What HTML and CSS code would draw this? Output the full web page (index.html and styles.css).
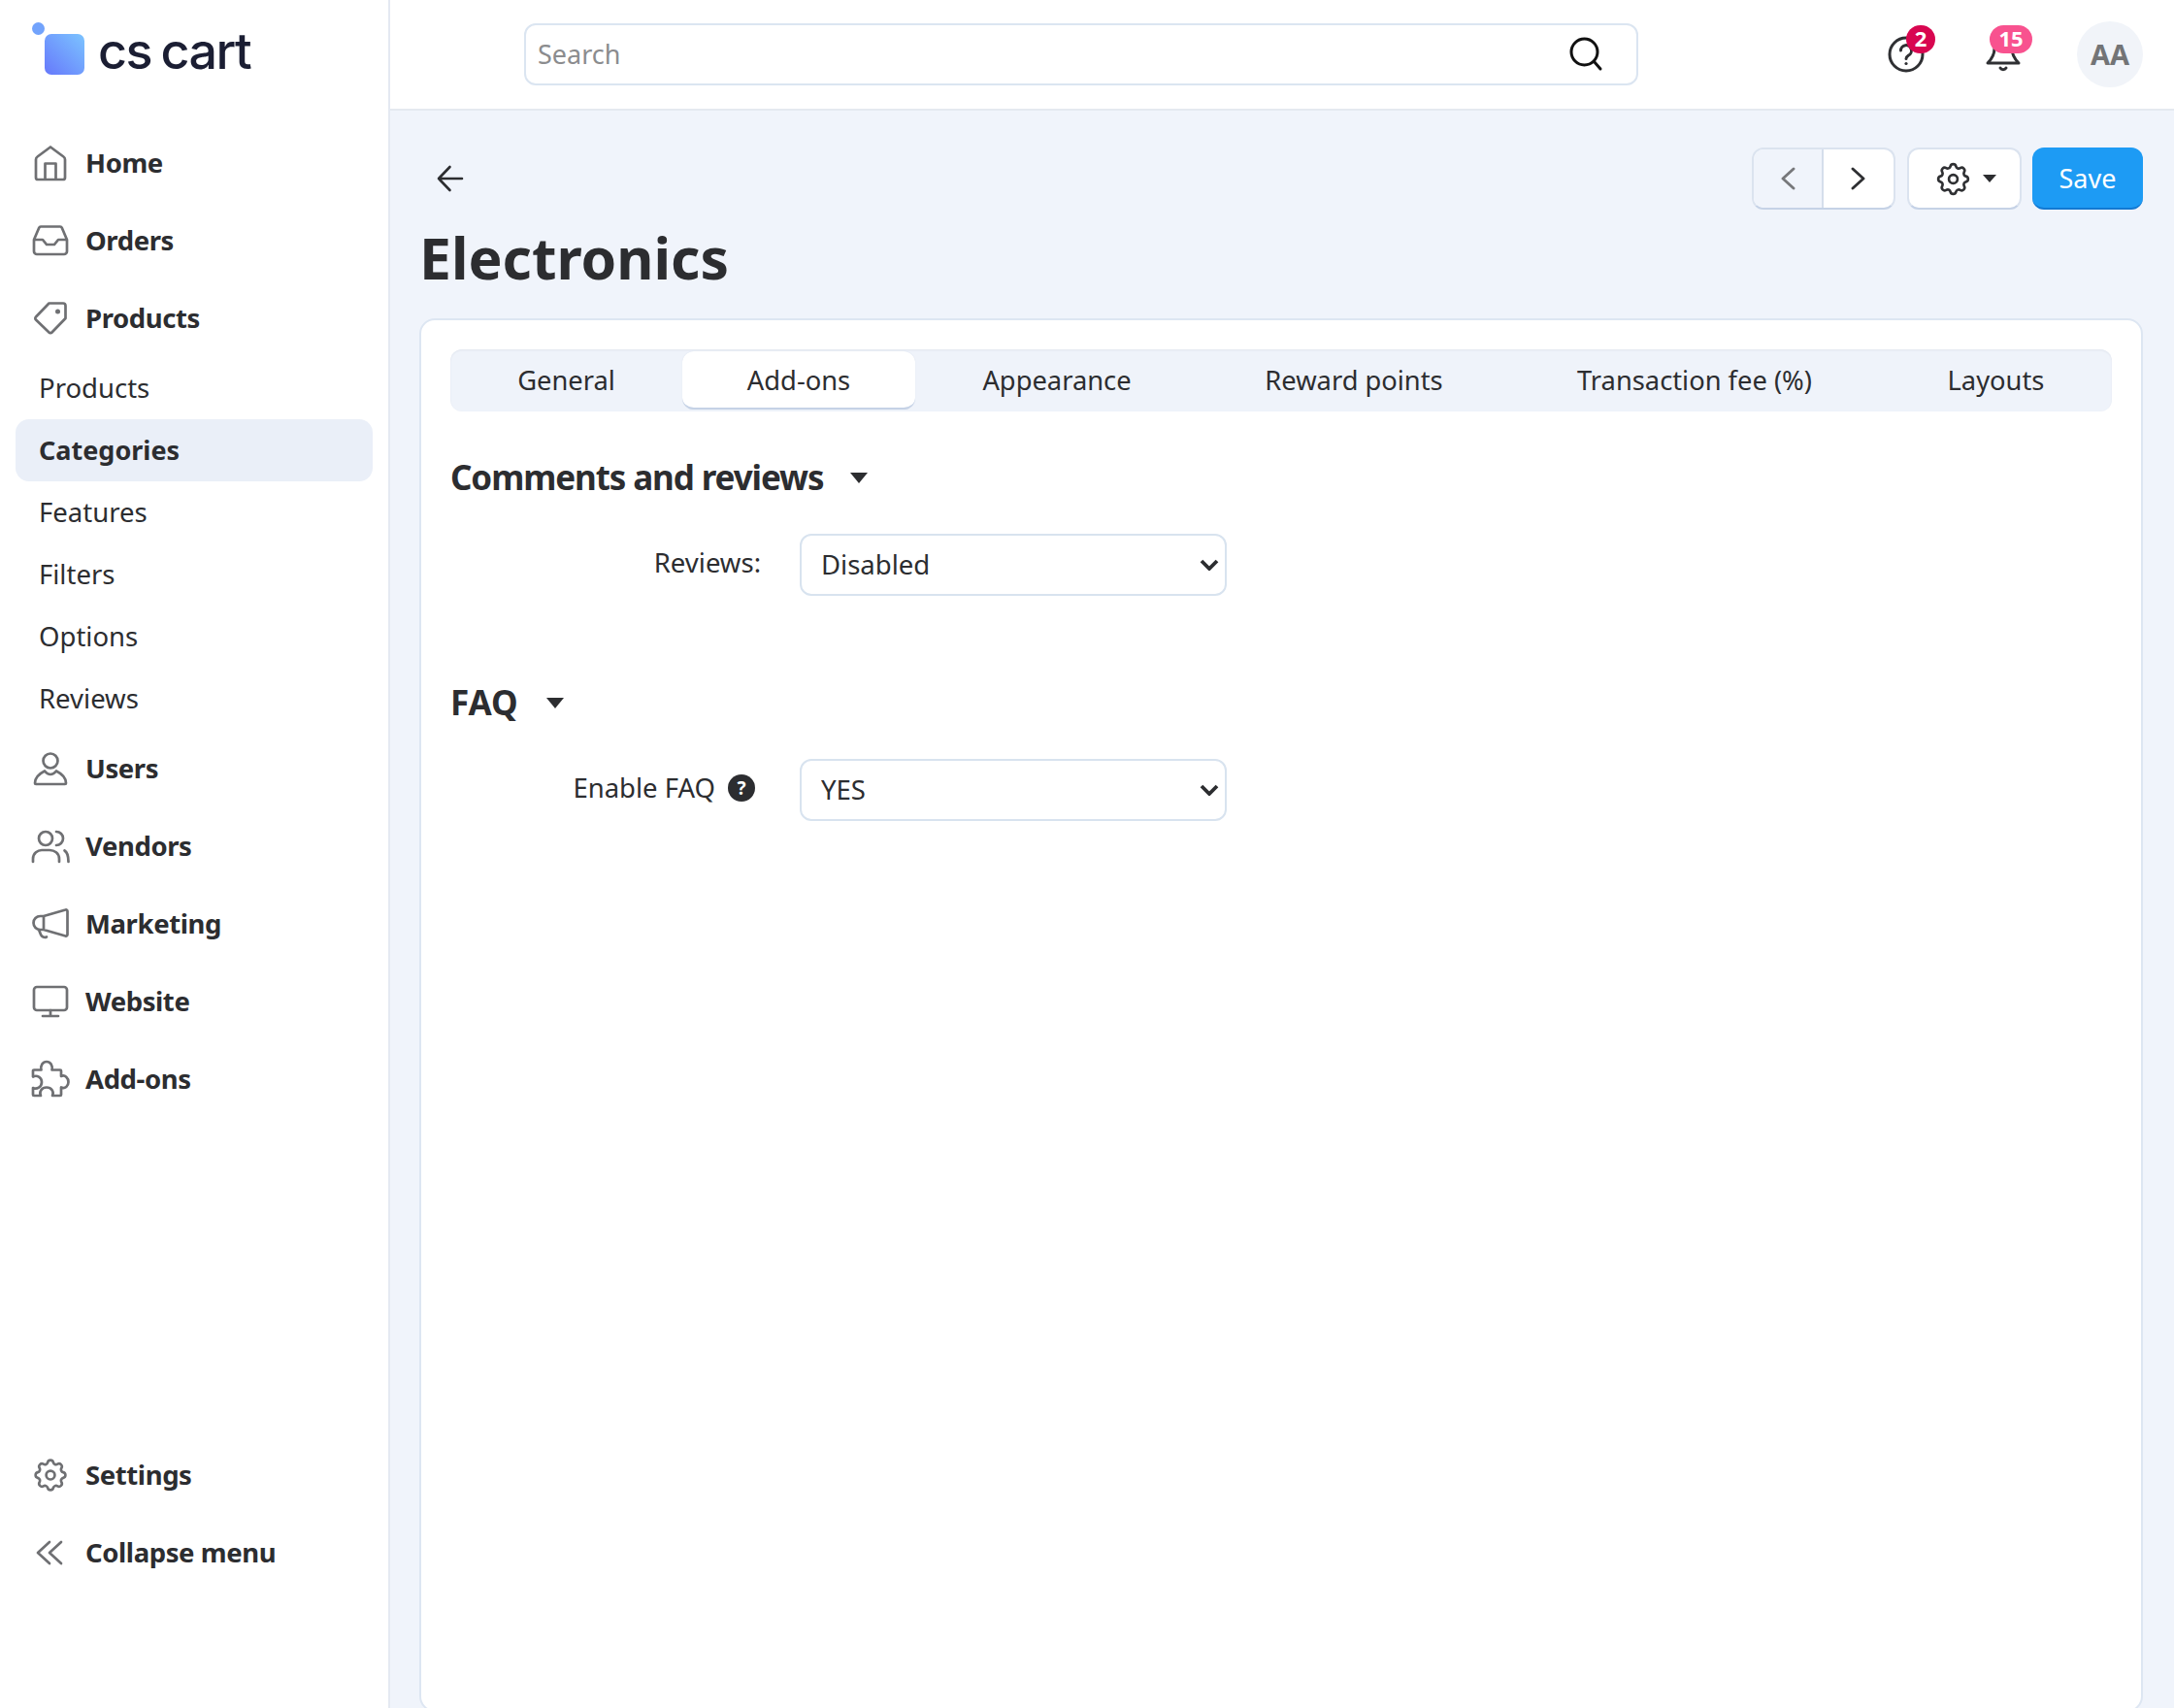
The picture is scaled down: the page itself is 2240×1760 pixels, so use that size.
FILE: index.html
```html
<!DOCTYPE html>
<html lang="en">
<head>
<meta charset="utf-8">
<title>Electronics</title>
<link rel="stylesheet" href="styles.css">
</head>
<body>
<div class="app">
  <aside class="sidebar">
    <a class="logo">
      <span class="logo-mark"><span class="logo-dot"></span><span class="logo-square"></span></span>
      <span class="logo-text">cs cart</span>
    </a>
    <nav class="nav">
      <a class="nav-item"><svg class="nav-icon" viewBox="0 0 40 40"><path d="M5 16.5Q5 14.5 6.5 13.5L20 3.5 33.5 13.5Q35 14.5 35 16.5V35a2 2 0 0 1-2 2H7a2 2 0 0 1-2-2ZM14.5 37V20.5H25.5V37"/></svg>Home</a>
      <a class="nav-item"><svg class="nav-icon" viewBox="0 0 40 40"><path d="M10 5.5H30a2 2 0 0 1 1.800 1.200L37 19V31a3 3 0 0 1-3 3H6a3 3 0 0 1-3-3V19L8.200 6.700A2 2 0 0 1 10 5.500ZM3 19H12L16 24H24L28 19H37"/></svg>Orders</a>
      <a class="nav-item"><svg class="nav-icon" viewBox="0 0 40 40"><path d="M18.500 4.500H33a2.500 2.500 0 0 1 2.500 2.500V20L21.500 34.500a2 2 0 0 1-3 0L5 21.500a2 2 0 0 1 0-3Z"/><circle class="fill" cx="27.500" cy="13" r="2.500"/></svg>Products</a>
      <a class="sub-item">Products</a>
      <a class="sub-item active">Categories</a>
      <a class="sub-item">Features</a>
      <a class="sub-item">Filters</a>
      <a class="sub-item">Options</a>
      <a class="sub-item">Reviews</a>
      <a class="nav-item"><svg class="nav-icon" viewBox="0 0 40 40"><circle cx="20" cy="12" r="7.500"/><path d="M5 36H35a1 1 0 0 0 1-1C36 28 30 24.500 26 22.500C24 25 22 26 20 26S16 25 14 22.500C10 24.500 4 28 4 35a1 1 0 0 0 1 1Z"/></svg>Users</a>
      <a class="nav-item"><svg class="nav-icon" viewBox="0 0 40 40"><circle cx="15" cy="12" r="7"/><path d="M26 5a7 7 0 0 1 0 14M2 36V33C2 27 7 24 11 24H19C24 24 29 27 29 33V36M34.500 24.500C37 26 38.500 29 38.500 36"/></svg>Vendors</a>
      <a class="nav-item"><svg class="nav-icon" viewBox="0 0 40 40"><path d="M37.500 7V31a1.500 1.500 0 0 1-2 1.500L13 26H9.500a7 7 0 0 1 0-14H13L35.500 5.500a1.500 1.500 0 0 1 2 1.500ZM13 12V26M8 26L10 31a4.500 4.500 0 0 0 6 2.500"/></svg>Marketing</a>
      <a class="nav-item"><svg class="nav-icon" viewBox="0 0 40 40"><rect x="3" y="5" width="34" height="24" rx="3"/><path d="M20 29V35M12 35H28"/></svg>Website</a>
      <a class="nav-item"><svg class="nav-icon" viewBox="0 0 40 40"><path d="M3 10.500H10.500C9.500 6 12 2 16 2S22.500 6 21.500 10.500H30a1 1 0 0 1 1 1V17C35 15 38.500 19 38.500 23S35 30.500 31 28.500V36a1 1 0 0 1-1 1H22C24 33 21 28.500 16 28.500S8 33 10 37H3a1 1 0 0 1-1-1V29C6 31 11 28 11 23S6 15.500 2 17.500V11.500a1 1 0 0 1 1-1Z"/></svg>Add-ons</a>
    </nav>
    <nav class="nav nav-bottom">
      <a class="nav-item"><svg class="nav-icon" viewBox="0 0 40 40"><g transform="translate(-0.500 -0.500) scale(1.710)"><path class="thin" d="M10.325 4.317c.426-1.756 2.924-1.756 3.350 0a1.724 1.724 0 002.573 1.066c1.543-.94 3.310.826 2.370 2.370a1.724 1.724 0 001.065 2.572c1.756.426 1.756 2.924 0 3.350a1.724 1.724 0 00-1.066 2.573c.94 1.543-.826 3.310-2.370 2.370a1.724 1.724 0 00-2.572 1.065c-.426 1.756-2.924 1.756-3.350 0a1.724 1.724 0 00-2.573-1.066c-1.543.94-3.310-.826-2.370-2.370a1.724 1.724 0 00-1.065-2.572c-1.756-.426-1.756-2.924 0-3.350a1.724 1.724 0 001.066-2.573c-.94-1.543.826-3.310 2.370-2.370.996.608 2.296.07 2.572-1.065z"/><circle class="thin" cx="12" cy="12" r="2.600"/></g></svg>Settings</a>
      <a class="nav-item"><svg class="nav-icon" viewBox="0 0 40 40"><path d="M19 9L7 20 19 31M31 9L19 20 31 31"/></svg>Collapse menu</a>
    </nav>
  </aside>
  <div class="main">
    <header class="topbar">
      <div class="search">
        <input class="search-input" type="text" placeholder="Search">
        <svg class="search-icon" viewBox="0 0 36 36"><circle cx="16.500" cy="15.500" r="13.500"/><path d="M26.500 25.500L33 33"/></svg>
      </div>
      <div class="top-actions">
        <span class="top-icon help">
          <svg viewBox="0 0 40 40"><circle cx="20" cy="20" r="17"/><path d="M14.500 16a5.500 5.500 0 1 1 8 5c-1.500 1-2.500 2-2.500 3.500"/><circle class="dot" cx="20" cy="29.500" r="1.600"/></svg>
          <span class="badge badge-red">2</span>
        </span>
        <span class="top-icon bell">
          <svg viewBox="0 0 40 40"><path d="M20 4C13 4 11 9 11 14C11 21 8 25 4 29H36C32 25 29 21 29 14C29 9 27 4 20 4ZM17 34a3.500 3.500 0 0 0 6 0"/></svg>
          <span class="badge badge-pink">15</span>
        </span>
        <span class="avatar">AA</span>
      </div>
    </header>
    <div class="content">
      <div class="toolbar">
        <a class="back"><svg viewBox="0 0 28 28"><path d="M26 14H2M13.500 2L2 14 13.500 26"/></svg></a>
        <div class="toolbar-buttons">
          <div class="pager">
            <a class="pager-btn disabled"><svg viewBox="0 0 16 24"><path d="M14 2L3 12 14 22"/></svg></a>
            <a class="pager-btn"><svg viewBox="0 0 16 24"><path d="M2 2L13 12 2 22"/></svg></a>
          </div>
          <a class="gear-btn">
            <svg viewBox="0 0 24 24"><path d="M10.325 4.317c.426-1.756 2.924-1.756 3.350 0a1.724 1.724 0 002.573 1.066c1.543-.94 3.310.826 2.370 2.370a1.724 1.724 0 001.065 2.572c1.756.426 1.756 2.924 0 3.350a1.724 1.724 0 00-1.066 2.573c.94 1.543-.826 3.310-2.370 2.370a1.724 1.724 0 00-2.572 1.065c-.426 1.756-2.924 1.756-3.350 0a1.724 1.724 0 00-2.573-1.066c-1.543.94-3.310-.826-2.370-2.370a1.724 1.724 0 00-1.065-2.572c-1.756-.426-1.756-2.924 0-3.350a1.724 1.724 0 001.066-2.573c-.94-1.543.826-3.310 2.370-2.370.996.608 2.296.07 2.572-1.065z"/><circle cx="12" cy="12" r="2.600"/></svg>
            <span class="caret caret-small"></span>
          </a>
          <a class="save-btn">Save</a>
        </div>
      </div>
      <h1 class="title">Electronics</h1>
      <section class="card">
        <div class="tabs">
          <a class="tab">General</a>
          <a class="tab active">Add-ons</a>
          <a class="tab">Appearance</a>
          <a class="tab">Reward points</a>
          <a class="tab">Transaction fee (%)</a>
          <a class="tab">Layouts</a>
        </div>
        <div class="section">
          <h2 class="section-title">Comments and reviews<span class="caret"></span></h2>
          <div class="field">
            <label class="field-label">Reviews:</label>
            <span class="select-wrap">
              <select class="field-select"><option>Disabled</option></select>
              <svg class="select-chevron" viewBox="0 0 20 12"><path d="M2 2L10 10 18 2"/></svg>
            </span>
          </div>
        </div>
        <div class="section">
          <h2 class="section-title section-title-short">FAQ<span class="caret"></span></h2>
          <div class="field">
            <label class="field-label">Enable FAQ<span class="hint">?</span></label>
            <span class="select-wrap">
              <select class="field-select"><option>YES</option></select>
              <svg class="select-chevron" viewBox="0 0 20 12"><path d="M2 2L10 10 18 2"/></svg>
            </span>
          </div>
        </div>
      </section>
    </div>
  </div>
</div>
</body>
</html>
```
FILE: styles.css
```css
* { box-sizing: border-box; }
html, body { margin: 0; height: 100%; }
body {
  font-family: "Noto Sans", "Open Sans", sans-serif;
  font-size: 28px;
  color: #2c2d30;
  background: #f0f4fb;
  overflow: hidden;
}
.app { display: flex; height: 1760px; overflow: hidden; }

/* Sidebar */
.sidebar {
  flex: none;
  width: 402px;
  display: flex;
  flex-direction: column;
  background: #fff;
  border-right: 2px solid #e4e9f2;
  padding-bottom: 120px;
}
.logo { height: 128px; flex: none; display: flex; align-items: flex-start; padding: 23px 0 0 33px; }
.logo-mark { display: block; position: relative; width: 54px; height: 54px; flex: none; }
.logo-dot { position: absolute; left: 0; top: 0; width: 13px; height: 13px; border-radius: 50%; background: #72a3fc; }
.logo-square { position: absolute; left: 13px; top: 12px; width: 41px; height: 42px; border-radius: 7px; background: linear-gradient(45deg, #6678fb, #7cc4ff); }
.logo-text { margin: -2px 0 0 14px; font-family: Inter, sans-serif; font-size: 52px; line-height: 64px; font-weight: 500; letter-spacing: -1.5px; word-spacing: -3px; color: #1b1e33; }
.nav { display: flex; flex-direction: column; }
.nav-bottom { margin-top: auto; }
.nav-item { height: 80px; display: flex; align-items: center; gap: 16px; padding: 0 0 1px 32px; font-weight: 700; font-size: 27.500px; letter-spacing: -0.400px; }
.nav-icon { width: 40px; height: 40px; flex: none; margin-top: 1px; fill: none; stroke: #6f7073; stroke-width: 2.700; stroke-linejoin: round; stroke-linecap: round; }
.nav-icon .fill { fill: #6f7073; stroke: none; }
.nav-icon .thin { stroke-width: 1.550; }
.sub-item { height: 64px; display: flex; align-items: center; margin: 0 16px; padding: 0 0 2px 24px; border-radius: 14px; font-size: 27.500px; }
.sub-item.active { background: #eaeff8; font-size: 27px; font-weight: 700; }

/* Main */
.main { flex: 1; min-width: 0; display: flex; flex-direction: column; }
.topbar { flex: none; height: 114px; display: flex; align-items: center; padding: 0 32px 0 138px; background: #fff; border-bottom: 2px solid #e4e9f0; }
.search { flex: none; width: 1148px; height: 64px; display: flex; align-items: center; padding: 0 34px 0 12px; border: 2px solid #dbe5f1; border-radius: 12px; background: #fff; }
.search-input { flex: 1; min-width: 0; border: 0; outline: 0; padding: 0 0 2px; font: inherit; font-size: 27px; color: #2c2d30; background: transparent; }
.search-input::placeholder { color: #8b8c8e; opacity: 1; }
.search-icon { width: 36px; height: 36px; flex: none; fill: none; stroke: #111; stroke-width: 3; stroke-linecap: round; }
.top-actions { margin-left: auto; display: flex; align-items: center; }
.top-icon { position: relative; width: 40px; height: 40px; flex: none; }
.top-icon svg { display: block; width: 40px; height: 40px; fill: none; stroke: #2f3033; stroke-width: 3; stroke-linecap: round; stroke-linejoin: round; }
.top-icon .dot { fill: #2f3033; stroke: none; }
.help { margin-right: 60px; }
.bell { margin-right: 56px; }
.badge { position: absolute; top: -10px; height: 29px; padding-bottom: 3px; display: flex; align-items: center; justify-content: center; border-radius: 15px; color: #fff; font-size: 22px; font-weight: 700; line-height: 1; }
.badge-red { left: 20px; width: 30px; background: #d80650; }
.badge-pink { left: 6px; width: 44px; background: #f8528f; }
.avatar { width: 68px; height: 68px; flex: none; padding-bottom: 2px; display: flex; align-items: center; justify-content: center; border-radius: 50%; background: #f1f4f9; color: #737476; font-size: 29px; font-weight: 700; }

.content { flex: 1; min-height: 0; display: flex; flex-direction: column; padding: 38px 32px 0 30px; }
.toolbar { flex: none; display: flex; align-items: center; justify-content: space-between; height: 64px; }
.back { margin-left: 18px; display: block; width: 28px; height: 28px; }
.back svg { display: block; width: 28px; height: 28px; fill: none; stroke: #2c2d30; stroke-width: 2.600; stroke-linecap: round; stroke-linejoin: round; }
.toolbar-buttons { display: flex; gap: 11px; }
.pager { display: flex; height: 64px; margin-right: 1px; border: 2px solid #dbe3ef; border-bottom-color: #c5d2e6; border-radius: 12px; overflow: hidden; background: #fff; }
.pager-btn { width: 72px; display: flex; align-items: center; justify-content: center; }
.pager-btn.disabled { background: #f0f4fb; border-right: 2px solid #d5deeb; }
.pager-btn svg { width: 16px; height: 24px; fill: none; stroke: #2f3033; stroke-width: 2.900; stroke-linecap: round; stroke-linejoin: round; }
.pager-btn.disabled svg { stroke: #77787b; }
.gear-btn { width: 118px; height: 64px; display: flex; align-items: center; justify-content: center; gap: 10px; border: 2px solid #dbe3ef; border-bottom-color: #c5d2e6; border-radius: 12px; background: #fff; }
.gear-btn svg { width: 41px; height: 41px; fill: none; stroke: #2f3033; stroke-width: 1.550; }
.save-btn { width: 114px; height: 64px; display: flex; align-items: center; justify-content: center; border-radius: 12px; border-bottom: 2px solid #1279d2; background: #1d9bf4; color: #fff; font-size: 27px; }
.title { flex: none; margin: 14px 0 26px; padding-bottom: 1px; height: 72px; font-size: 58.800px; line-height: 71px; font-weight: 700; }

/* Card */
.card { flex: 1; min-height: 0; margin-bottom: -4px; padding: 30px 30px 0; background: #fff; border: 2px solid #dde6f2; border-radius: 16px; }
.tabs { display: grid; grid-template-columns: 239px 240px 292px 320px 382px 1fr; height: 64px; padding: 2px 0; border-radius: 12px; background: #eff3fa; box-shadow: inset 0 1px 2px #e0e5ee; }
.tab { display: flex; align-items: center; justify-content: center; padding-bottom: 2px; border-radius: 12px; font-size: 27.300px; }
.tab.active { padding-bottom: 0; background: #fff; border-bottom: 2px solid #c5d2e6; box-shadow: 0 0 1px #cfd9e8; }
.section { margin-top: 44px; }
.section + .section { margin-top: 86px; }
.section-title { margin: 0 0 34px; padding-bottom: 2px; display: flex; align-items: center; height: 48px; font-size: 35px; letter-spacing: -1.100px; font-weight: 700; }
.section-title-short { letter-spacing: 0; }
.caret { display: block; margin: 2px 0 0 28px; width: 0; height: 0; border-left: 9.500px solid transparent; border-right: 9.500px solid transparent; border-top: 11px solid #2c2d30; }
.section-title-short .caret { margin-left: 29px; }
.caret-small { margin: 0; border-left-width: 7.500px; border-right-width: 7.500px; border-top-width: 8px; }
.field { display: flex; align-items: center; gap: 40px; }
.field-label { width: 320px; flex: none; display: flex; align-items: center; justify-content: flex-end; margin-top: -6px; font-size: 27.500px; }
.hint { flex: none; width: 28px; height: 28px; margin: 2px 6px 0 13px; display: flex; align-items: center; justify-content: center; border-radius: 50%; background: #2c2d30; color: #fff; font-size: 19px; font-weight: 700; }
.select-wrap { position: relative; display: block; width: 440px; height: 64px; flex: none; }
.field-select { display: block; width: 100%; height: 64px; padding: 0 40px 2px 20px; appearance: none; border: 2px solid #d8e3ef; border-radius: 12px; background-color: #fff; color: #2c2d30; font-family: inherit; font-size: 27.500px; }
.select-chevron { position: absolute; top: 26px; right: 8px; width: 20px; height: 12px; fill: none; stroke: #2c2d30; stroke-width: 3.800; pointer-events: none; }
```
